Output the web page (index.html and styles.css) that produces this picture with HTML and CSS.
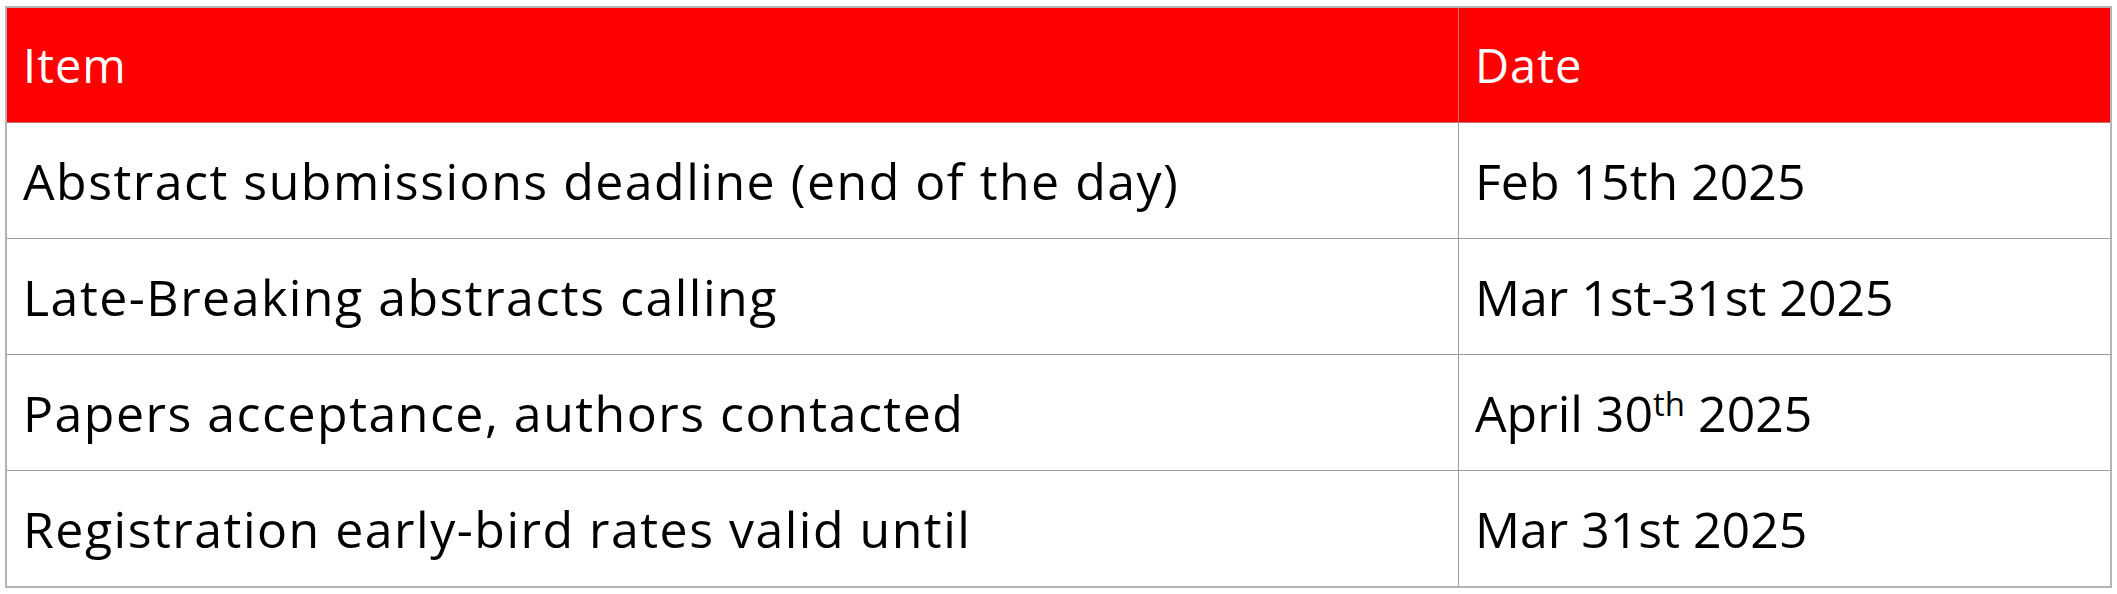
FILE: index.html
```html
<!DOCTYPE html>
<html lang="en">
<head>
<meta charset="utf-8">
<title>Important dates</title>
<link rel="stylesheet" href="styles.css">
</head>
<body>
<table class="dates">
  <thead>
    <tr><th class="col-item">Item</th><th class="col-date">Date</th></tr>
  </thead>
  <tbody>
    <tr><td class="item">Abstract submissions deadline (end of the day)</td><td>Feb 15th 2025</td></tr>
    <tr><td class="item">Late-Breaking abstracts calling</td><td>Mar 1st-31st 2025</td></tr>
    <tr><td class="item">Papers acceptance, authors contacted</td><td>April 30<sup>th</sup> 2025</td></tr>
    <tr><td class="item">Registration early-bird rates valid until</td><td>Mar 31st 2025</td></tr>
  </tbody>
</table>
</body>
</html>
```
FILE: styles.css
```css
html, body {
  margin: 0;
  padding: 0;
  background: #ffffff;
}
body {
  padding: 6px 5px 0 5px;
}
.dates {
  width: 100%;
  border-collapse: collapse;
  border: 2px solid #b4b4b4;
  font-family: "Open Sans", "Liberation Sans", sans-serif;
  color: #000000;
}
.dates th,
.dates td {
  text-align: left;
  font-weight: 400;
  padding: 0 16px;
  vertical-align: middle;
  border: 1px solid #9c9c9c;
}
.dates th {
  background: #fe0000;
  color: #ffffff;
  height: 114px;
  font-size: 47px;
  letter-spacing: 1px;
  border-color: #c07070;
}
.dates td {
  height: 115px;
  font-size: 50px;
}
.dates td.item {
  letter-spacing: 1.5px;
}
.col-item {
  width: 1419px;
}
.dates sup {
  font-size: 0.66em;
  line-height: 0;
  vertical-align: 0.5em;
}
```
